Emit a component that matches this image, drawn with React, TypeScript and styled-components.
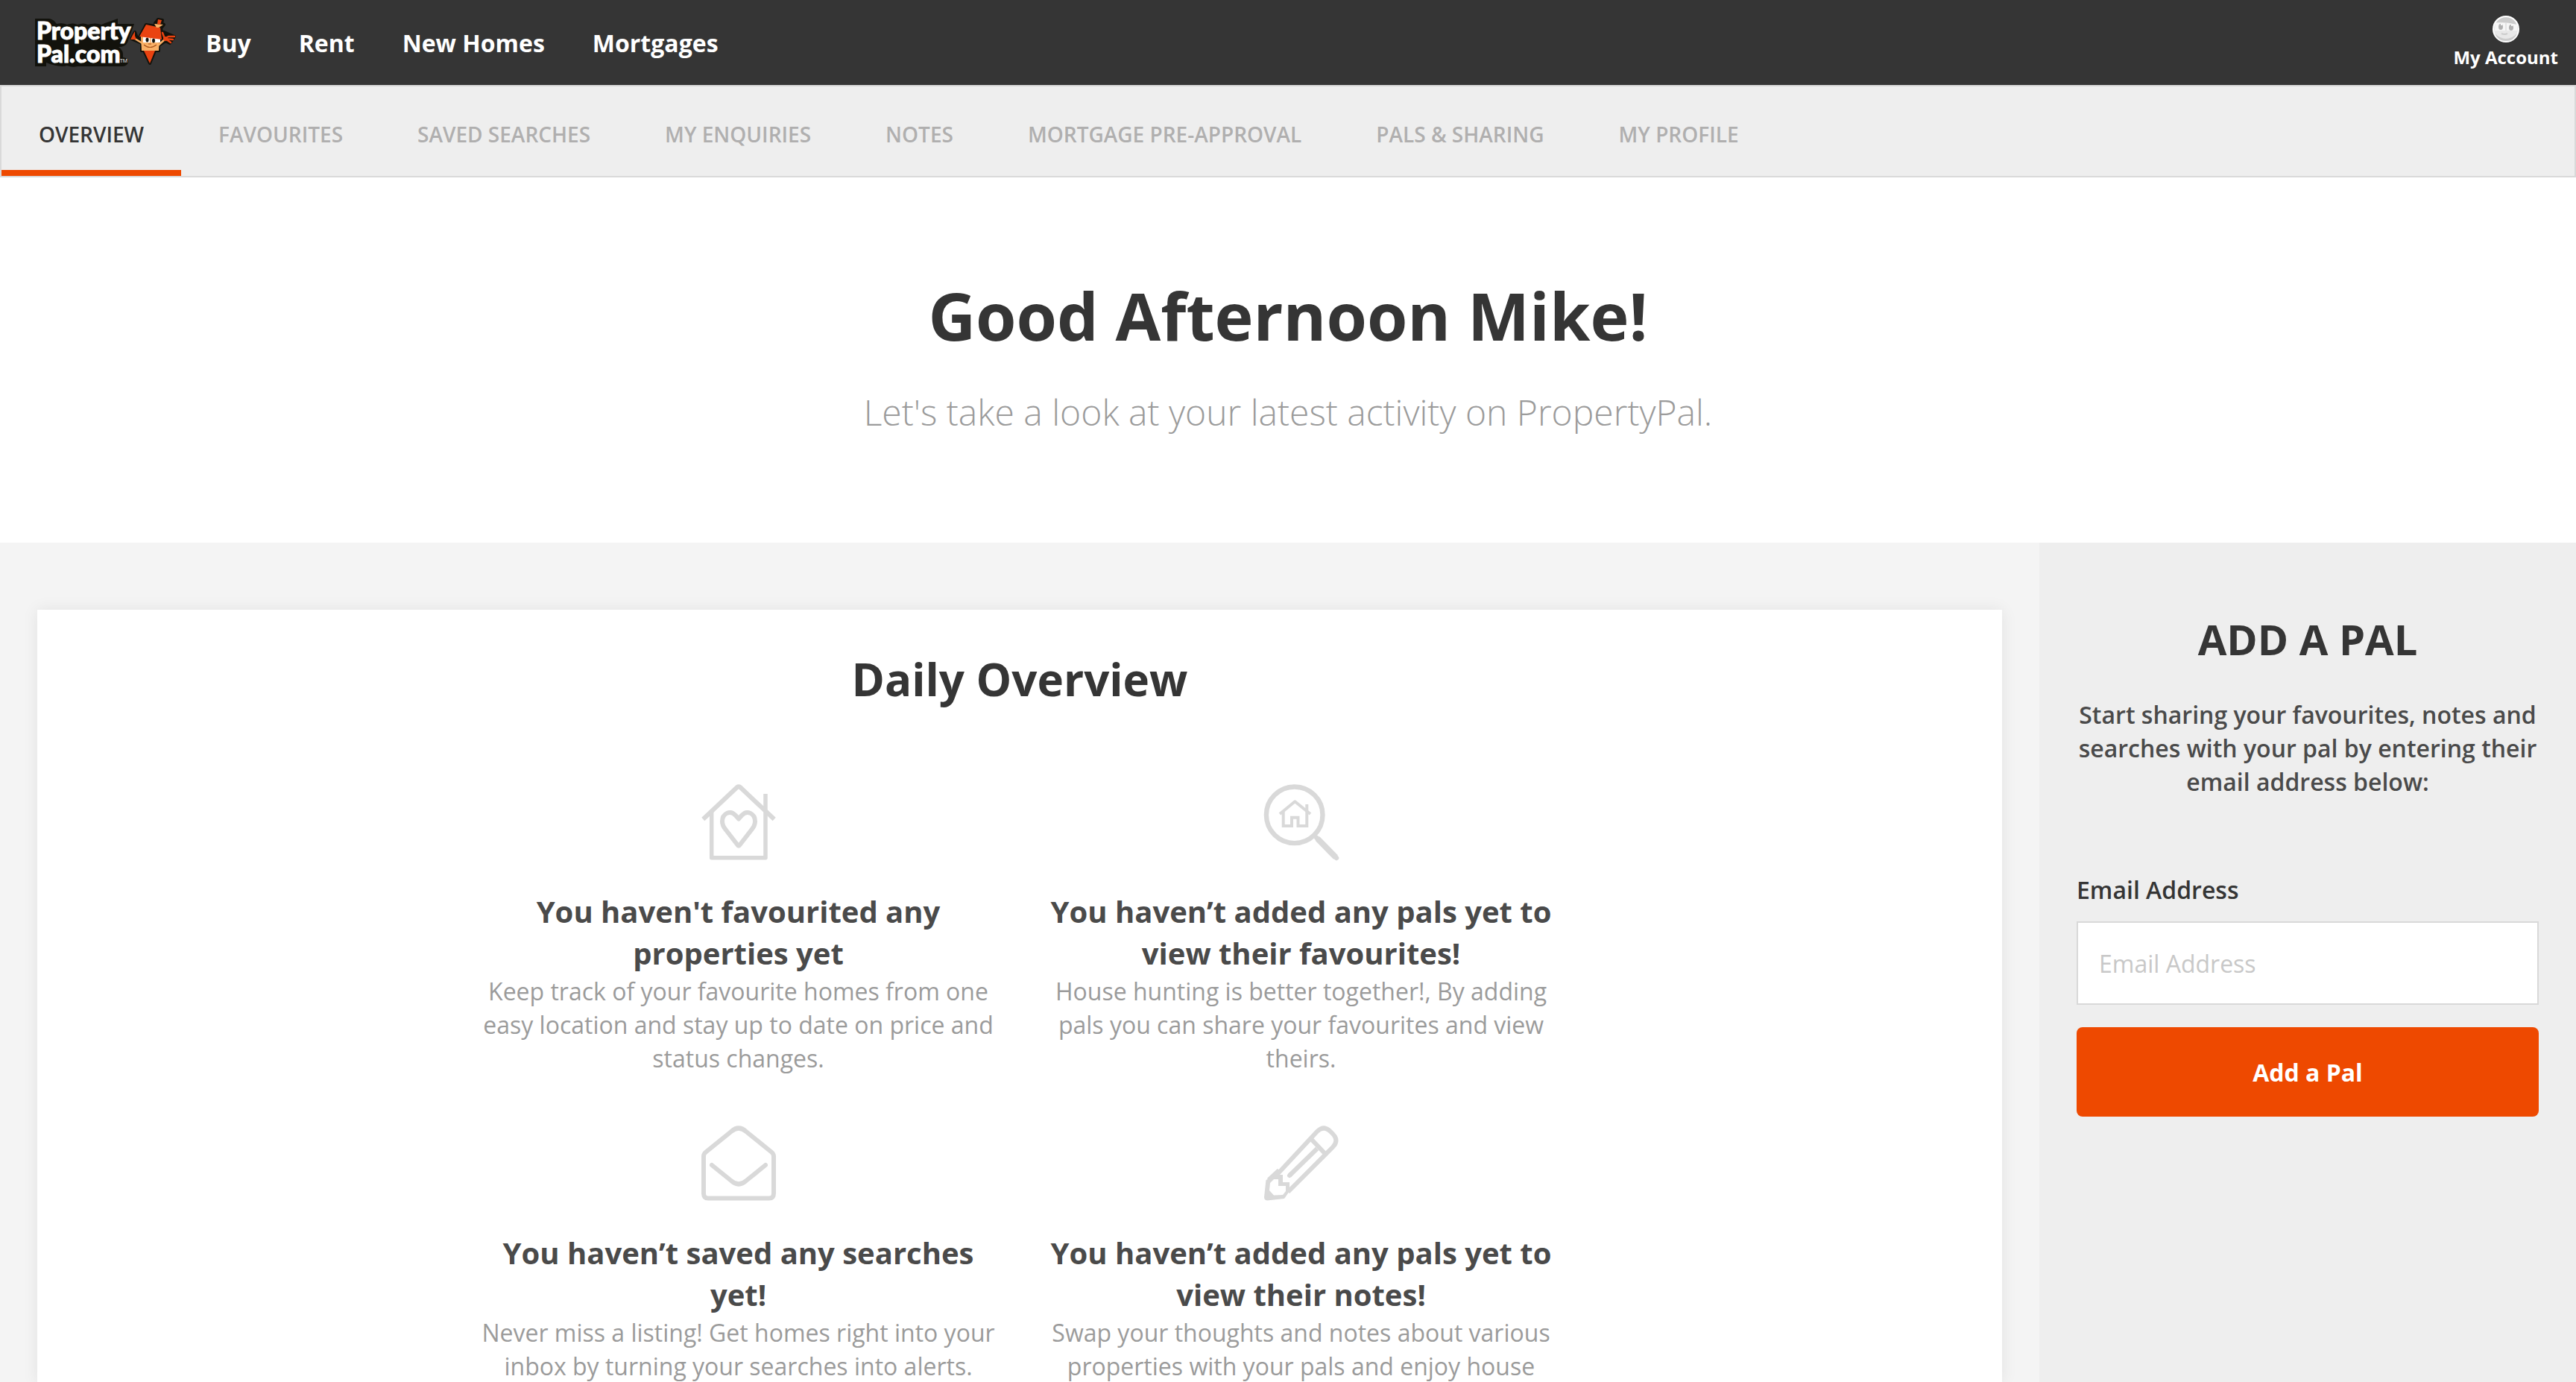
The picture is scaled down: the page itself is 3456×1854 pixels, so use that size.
import React from "react";
import styled, { createGlobalStyle } from "styled-components";

const GlobalStyle = createGlobalStyle`
  *, *::before, *::after { box-sizing: border-box; }
  body { margin: 0; background: #ffffff; }
  h1, h2, h3, p { margin: 0; }
`;

const Page = styled.div`
  display: flex;
  flex-direction: column;
  height: 100vh;
  overflow-y: auto;
  scrollbar-width: none;
  font-family: "Open Sans", "Noto Sans", sans-serif;
  font-size: 32px;
  line-height: 45px;
  color: #353535;
`;

const Header = styled.header`
  display: flex;
  flex-shrink: 0;
  align-items: center;
  height: 114px;
  padding: 0 24px 0 46px;
  background: #353535;
`;

const LogoLink = styled.a`
  display: flex;
  margin-right: 7px;
`;

const MainNav = styled.nav`
  display: flex;
  flex: 1;
`;

const NavLink = styled.a`
  padding: 0 32px;
  font-weight: 700;
  color: #ffffff;
  text-decoration: none;
`;

const AccountLink = styled.a`
  display: flex;
  flex-direction: column;
  align-items: center;
  gap: 4px;
  font-size: 24px;
  font-weight: 700;
  line-height: 32px;
  color: #ffffff;
  text-decoration: none;
`;

const Tabs = styled.nav`
  display: flex;
  flex-shrink: 0;
  border: 2px solid #d9d9d9;
  background: #eeeeee;
`;

const Tab = styled.a<{ $active?: boolean }>`
  padding: 45px 50px 37px;
  font-size: 28px;
  font-weight: 600;
  line-height: 38px;
  text-transform: uppercase;
  text-decoration: none;
  color: ${(p) => (p.$active ? "#353535" : "#b0afaf")};
  box-shadow: ${(p) => (p.$active ? "inset 0 -8px 0 #ee4900" : "none")};
`;

const Hero = styled.section`
  flex-shrink: 0;
  padding: 125px 50px 143px;
  text-align: center;
`;

const Greeting = styled.h1`
  font-size: 88px;
  font-weight: 700;
  line-height: 120px;
`;

const Intro = styled.p`
  margin-top: 38px;
  font-size: 48px;
  font-weight: 300;
  line-height: 64px;
  color: #9b9b9b;
`;

const Body = styled.div`
  display: flex;
  flex: 1 0 auto;
`;

const Main = styled.main`
  display: flex;
  flex: 1;
  padding: 90px 50px 0;
  background: #f4f4f4;
`;

const Card = styled.section`
  flex: 1;
  padding: 50px 50px 0;
  background: #ffffff;
  box-shadow: 0 0 20px rgba(0, 0, 0, 0.08);
`;

const CardTitle = styled.h2`
  font-size: 60px;
  font-weight: 700;
  line-height: 86px;
  text-align: center;
`;

const Grid = styled.div`
  display: grid;
  grid-template-columns: repeat(2, 1fr);
  row-gap: 68px;
  max-width: 1510px;
  margin: 98px auto 0;
`;

const Item = styled.article`
  padding: 0 30px;
  text-align: center;
`;

const ItemIcon = styled.svg`
  display: block;
  width: 100px;
  height: 101px;
  margin: 0 auto 42px;
  overflow: visible;
  fill: none;
  stroke: #d9d9d9;
  stroke-width: 6;
  stroke-linejoin: round;
`;

const ItemTitle = styled.h3`
  font-size: 40px;
  font-weight: 700;
  line-height: 56px;
  color: #4a4a4a;
`;

const ItemText = styled.p`
  color: #9b9b9b;
`;

const Sidebar = styled.aside`
  width: 720px;
  padding: 91px 50px 50px;
  background: #eeeeee;
`;

const SidebarTitle = styled.h2`
  font-size: 56px;
  font-weight: 700;
  line-height: 76px;
  text-align: center;
  text-transform: uppercase;
`;

const SidebarText = styled.p`
  margin-top: 41px;
  font-weight: 600;
  text-align: center;
  color: #4a4a4a;
`;

const PalForm = styled.form`
  display: flex;
  flex-direction: column;
  margin-top: 100px;
`;

const Label = styled.label`
  font-weight: 600;
`;

const EmailInput = styled.input`
  width: 100%;
  height: 112px;
  margin: 20px 0 30px;
  padding: 0 28px;
  border: 2px solid #d9d9d9;
  border-radius: 0;
  background: #ffffff;
  font: inherit;
  color: #353535;

  &::placeholder {
    color: #c8c8c8;
    opacity: 1;
  }
`;

const SubmitButton = styled.button`
  height: 120px;
  border: 0;
  border-radius: 8px;
  background: #ee4900;
  font: inherit;
  font-weight: 700;
  color: #ffffff;
  cursor: pointer;
`;

const LogoText = styled.text`
  font-family: Lato, "Open Sans", sans-serif;
  font-size: 32px;
  font-weight: 900;
  fill: #ffffff;
  stroke: #ffffff;
  stroke-width: 1px;
`;

const LogoMark = styled.text`
  font-family: "Open Sans", sans-serif;
  font-size: 7px;
  fill: #ffffff;
`;

const Logo = () => (
  <svg width="191" height="70" viewBox="46 22 191 70" role="img" aria-label="PropertyPal.com">
    <path
      d="M47 25H66Q72 26 76 32Q84 30 90 33Q98 30 104 33Q112 30 118 33Q128 30 136 33L141 31L158 25V32H180L171 57Q168 63 159 63Q166 67 165 77Q173 78 172 84Q170 89 164 89H104Q97 91 90 88Q80 91 62 84V89H47Z"
      fill="#12120c"
    />
    <LogoText>
      <tspan x="49" y="53">Property</tspan>
      <tspan x="49" y="84">Pal.com</tspan>
    </LogoText>
    <LogoMark x="161" y="84">TM</LogoMark>
    <g stroke="#12120c" strokeWidth="4" strokeLinejoin="round" fill="#12120c">
      <path d="M196 33L209 35L208 31L212 26L218 27L217 31L220 33L216 38L218 47L220 43L234 49L228 58L222 55L213 61V68H208L201 85L193 68H190V58L176 52L181 43L184 51L187 50Z" />
    </g>
    <path d="M191 58L181 52M212 61L222 52" stroke="#f9b066" strokeWidth="2.500" fill="none" />
    <path d="M189 49H214L213 68H190Z" fill="#f9b066" />
    <path d="M192 49L215 51V57H192Z" fill="#ffffff" />
    <path d="M202 49V57" stroke="#f9b066" strokeWidth="1.500" />
    <ellipse cx="197.500" cy="53.500" rx="2" ry="3" fill="#12120c" />
    <ellipse cx="206" cy="54.500" rx="2" ry="3" fill="#12120c" />
    <path d="M193 60Q201 67 210 60M199 59H203" stroke="#a8531b" strokeWidth="1.200" fill="none" />
    <path d="M196 33L215 37L217 53L187 49Z" fill="#ea4311" />
    <path d="M207 32L219 33L213 37H210Z" fill="#f9b066" />
    <path d="M212 26L217 27L215 33L211 32Z" fill="#ea4311" />
    <path d="M193 68H208L201 85Z" fill="#ea4311" />
    <path d="M175 53L178 47L181 42L181 48L183 53Z" fill="#ea4311" />
    <path
      d="M221 52L218 44M221 52L226 49L234 49M222 52L232 53M222 52L229 57"
      fill="none"
      stroke="#ea4311"
      strokeWidth="2.500"
      strokeLinecap="round"
    />
    <circle cx="222" cy="52" r="3" fill="#ea4311" />
  </svg>
);

const Avatar = () => (
  <svg width="36" height="36" viewBox="0 0 36 36" aria-hidden="true">
    <circle cx="18" cy="18" r="18" fill="#ffffff" />
    <circle cx="18" cy="18" r="16" fill="#e8e8e8" />
    <path d="M5 9A16 16 0 0 1 31 9L32 12Q18 8 5 9Z" fill="#cccccc" />
    <path d="M4 10Q18 9 33 12V20H3Z" fill="#f7f7f7" />
    <path d="M18 10V20" stroke="#e4e4e4" strokeWidth="2" />
    <path d="M3 24Q18 38 33 24Q29 34 18 34Q7 34 3 24Z" fill="#cccccc" />
    <ellipse cx="11" cy="15" rx="3" ry="4" fill="#b0b0b0" />
    <ellipse cx="25" cy="16" rx="3" ry="4" fill="#b0b0b0" />
    <path d="M12 11V13M26 12V14" stroke="#f7f7f7" strokeWidth="2" />
    <path d="M12 24Q16 26 20 24" stroke="#cccccc" strokeWidth="2" fill="none" />
  </svg>
);

const HouseHeart = () => (
  <>
    <path d="M2.300 47L48 4Q50 2.500 52 4L97.700 47" />
    <path d="M13.700 37V98.700H86V13" strokeWidth="5.500" />
    <path d="M50 46.500L46 42C39 34 28 39 28 50C28 55 30 58 33 61.500L48.500 81.500Q50 84 51.500 81.500L67 61.500C70 58 72 55 72 50C72 39 61 34 54 42Z" />
  </>
);

const SearchHouse = () => (
  <>
    <circle cx="40.700" cy="41.300" r="37.800" strokeWidth="6.400" />
    <path d="M71.500 73L96 98" strokeWidth="8" />
    <path d="M70.500 72L72 73.500M95 97L97 99" strokeWidth="6.500" strokeLinecap="round" />
    <path d="M21 40L41.300 23.300L62 40" strokeWidth="4" />
    <path d="M25.700 37V56H37V44.700H45.500V56H57.300V27" strokeWidth="4" strokeLinejoin="miter" />
  </>
);

const OpenMail = () => (
  <>
    <path d="M3 41Q3 38 6 35.500L40 8Q50 -1 60 8L94 35.500Q97 38 97 41V91Q97 97.500 91 97.500H9Q3 97.500 3 91Z" />
    <path d="M14 53L40 74Q50 83 60 74L86 53" strokeLinecap="round" />
  </>
);

const Pencil = () => (
  <>
    <path d="M17 66L71 8Q80 -1 89 8L92 11Q101 20 92 29L32 89M6 73L20 60" />
    <path d="M64 19L82 38M34 67L71 31" />
    <path d="M34 67L35 66" strokeLinecap="round" />
    <path d="M2.500 73L17 66H25V76H34V88L27 98L4 100.500Q0 100 0 96Z" fill="#d9d9d9" stroke="none" />
    <path d="M13 72H19V81H29V88L25 93L13 93.500L7 87L8 77Z" fill="#ffffff" stroke="none" />
  </>
);

const tabs = [
  "Overview",
  "Favourites",
  "Saved Searches",
  "My Enquiries",
  "Notes",
  "Mortgage Pre-Approval",
  "Pals & Sharing",
  "My Profile",
];

const items = [
  {
    Icon: HouseHeart,
    title: "You haven't favourited any properties yet",
    text: "Keep track of your favourite homes from one easy location and stay up to date on price and status changes.",
  },
  {
    Icon: SearchHouse,
    title: "You haven’t added any pals yet to view their favourites!",
    text: "House hunting is better together!, By adding pals you can share your favourites and view theirs.",
  },
  {
    Icon: OpenMail,
    title: "You haven’t saved any searches yet!",
    text: "Never miss a listing! Get homes right into your inbox by turning your searches into alerts.",
  },
  {
    Icon: Pencil,
    title: "You haven’t added any pals yet to view their notes!",
    text: "Swap your thoughts and notes about various properties with your pals and enjoy house",
  },
];

export default function App() {
  return (
    <Page>
      <GlobalStyle />
      <Header>
        <LogoLink href="#">
          <Logo />
        </LogoLink>
        <MainNav>
          {["Buy", "Rent", "New Homes", "Mortgages"].map((name) => (
            <NavLink href="#" key={name}>
              {name}
            </NavLink>
          ))}
        </MainNav>
        <AccountLink href="#">
          <Avatar />
          My Account
        </AccountLink>
      </Header>
      <Tabs>
        {tabs.map((name, i) => (
          <Tab href="#" key={name} $active={i === 0}>
            {name}
          </Tab>
        ))}
      </Tabs>
      <Hero>
        <Greeting>Good Afternoon Mike!</Greeting>
        <Intro>Let's take a look at your latest activity on PropertyPal.</Intro>
      </Hero>
      <Body>
        <Main>
          <Card>
            <CardTitle>Daily Overview</CardTitle>
            <Grid>
              {items.map(({ Icon, title, text }) => (
                <Item key={title}>
                  <ItemIcon viewBox="0 0 100 101" aria-hidden="true">
                    <Icon />
                  </ItemIcon>
                  <ItemTitle>{title}</ItemTitle>
                  <ItemText>{text}</ItemText>
                </Item>
              ))}
            </Grid>
          </Card>
        </Main>
        <Sidebar>
          <SidebarTitle>Add a Pal</SidebarTitle>
          <SidebarText>
            Start sharing your favourites, notes and searches with your pal by entering their email address below:
          </SidebarText>
          <PalForm onSubmit={(e) => e.preventDefault()}>
            <Label htmlFor="pal-email">Email Address</Label>
            <EmailInput id="pal-email" type="email" placeholder="Email Address" />
            <SubmitButton type="submit">Add a Pal</SubmitButton>
          </PalForm>
        </Sidebar>
      </Body>
    </Page>
  );
}
